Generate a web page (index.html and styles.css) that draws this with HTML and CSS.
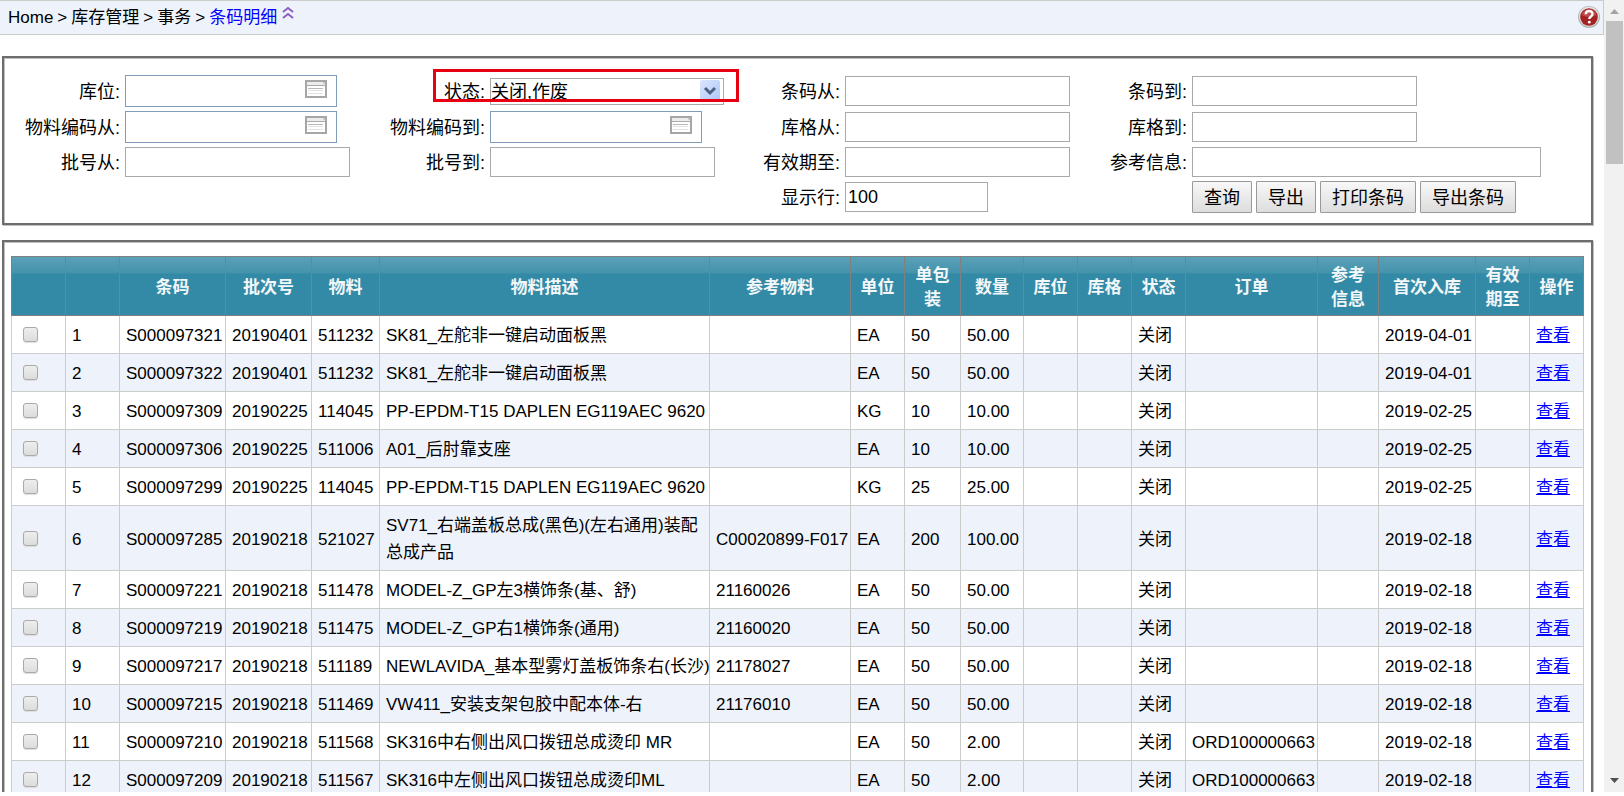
FILE: index.html
```html
<!DOCTYPE html>
<html lang="zh-CN">
<head>
<meta charset="utf-8">
<title>条码明细</title>
<link rel="stylesheet" href="styles.css">
</head>
<body>
<svg class="defs" aria-hidden="true">
  <symbol id="lookup" viewBox="0 0 22 18">
    <rect x="1" y="1" width="20" height="16" fill="#fff" stroke="#a6a6a6" stroke-width="2"/>
    <rect x="2" y="2" width="18" height="3" fill="#ececec"/>
    <path d="M1 5.5h20" stroke="#aaa"/>
    <path d="M18 3h2" stroke="#aaa"/>
    <path d="M3 8.5h15" stroke="#b8b8b8"/>
    <path d="M3 10.5h15M3 13.5h15" stroke="#e2e2e2"/>
  </symbol>
</svg>
<div class="page">
  <header class="topbar">
    <nav class="crumbs">
      <span>Home</span><span>&gt;</span><span>库存管理</span><span>&gt;</span><span>事务</span><span>&gt;</span>
      <a class="current" href="#">条码明细</a>
    </nav>
    <button class="collapse" type="button" aria-label="收起"><svg width="12" height="14" viewBox="0 0 12 14"><path d="M1 6l5-4 5 4M1 12l5-4 5 4" fill="none" stroke="#8a5fc0" stroke-width="2"/></svg></button>
    <button class="help" type="button" aria-label="帮助"><svg width="22" height="22" viewBox="0 0 22 22"><circle cx="11" cy="11" r="11" fill="#b4b4b4"/><circle cx="11" cy="10.500" r="10" fill="#e4e4e4"/><circle cx="11" cy="11" r="8.800" fill="#a32222"/><path d="M3.500 9a7.800 7.800 0 0 1 15 0q-7 4-15 0z" fill="#c04a4a"/><path d="M7.800 8.300c0-4.300 6.700-4.300 6.700-.3 0 2.600-3.200 2.300-3.200 5" fill="none" stroke="#fff" stroke-width="2.400"/><circle cx="11.300" cy="16.200" r="1.400" fill="#fff"/></svg></button>
  </header>

  <form class="panel filters">
    <label for="loc">库位:</label>
    <div class="field lookup"><input id="loc" type="text"><button type="button" aria-label="选择库位"><svg width="22" height="18"><use href="#lookup"/></svg></button></div>
    <label for="status">状态:</label>
    <div class="field status"><select id="status"><option>关闭,作废</option></select>
      <svg class="arrow" width="20" height="21" viewBox="0 0 20 21"><defs><linearGradient id="blue" x2="1" y2="1"><stop offset="0" stop-color="#dbe6ff"/><stop offset="1" stop-color="#aec6f7"/></linearGradient></defs><rect width="20" height="21" rx="2" fill="url(#blue)"/><path d="M5 8l5 5 5-5" fill="none" stroke="#4d6185" stroke-width="3"/></svg>
      <span class="highlight"></span></div>
    <label for="bcFrom">条码从:</label>
    <div class="field"><input id="bcFrom" type="text"></div>
    <label for="bcTo">条码到:</label>
    <div class="field"><input id="bcTo" type="text"></div>

    <label for="matFrom">物料编码从:</label>
    <div class="field lookup"><input id="matFrom" type="text"><button type="button" aria-label="选择物料"><svg width="22" height="18"><use href="#lookup"/></svg></button></div>
    <label for="matTo">物料编码到:</label>
    <div class="field lookup"><input id="matTo" type="text"><button type="button" aria-label="选择物料"><svg width="22" height="18"><use href="#lookup"/></svg></button></div>
    <label for="binFrom">库格从:</label>
    <div class="field"><input id="binFrom" type="text"></div>
    <label for="binTo">库格到:</label>
    <div class="field"><input id="binTo" type="text"></div>

    <label for="lotFrom">批号从:</label>
    <div class="field"><input id="lotFrom" type="text"></div>
    <label for="lotTo">批号到:</label>
    <div class="field"><input id="lotTo" type="text"></div>
    <label for="valid">有效期至:</label>
    <div class="field"><input id="valid" type="text"></div>
    <label for="ref">参考信息:</label>
    <div class="field"><input id="ref" class="wide" type="text"></div>

    <label class="rows" for="rows">显示行:</label>
    <div class="field"><input id="rows" class="short" type="text" value="100"></div>
    <div class="actions">
      <button type="button">查询</button>
      <button type="button">导出</button>
      <button type="button">打印条码</button>
      <button type="button">导出条码</button>
    </div>
  </form>

  <section class="panel results">
    <table>
      <colgroup>
        <col class="c54"><col class="c54"><col class="c106"><col class="c86"><col class="c68"><col class="c330"><col class="c141"><col class="c54"><col class="c56"><col class="c63"><col class="c54"><col class="c54"><col class="c54"><col class="c132"><col class="c61"><col class="c97"><col class="c54"><col class="c54">
      </colgroup>
      <thead>
        <tr><th></th><th></th><th>条码</th><th>批次号</th><th>物料</th><th>物料描述</th><th>参考物料</th><th>单位</th><th>单包装</th><th>数量</th><th>库位</th><th>库格</th><th>状态</th><th>订单</th><th>参考信息</th><th>首次入库</th><th>有效期至</th><th>操作</th></tr>
      </thead>
      <tbody>
        <tr><td><input type="checkbox" aria-label="选择 1"></td><td>1</td><td>S000097321</td><td>20190401</td><td>511232</td><td>SK81_左舵非一键启动面板黑</td><td></td><td>EA</td><td>50</td><td>50.00</td><td></td><td></td><td>关闭</td><td></td><td></td><td>2019-04-01</td><td></td><td><a href="#">查看</a></td></tr>
        <tr><td><input type="checkbox" aria-label="选择 2"></td><td>2</td><td>S000097322</td><td>20190401</td><td>511232</td><td>SK81_左舵非一键启动面板黑</td><td></td><td>EA</td><td>50</td><td>50.00</td><td></td><td></td><td>关闭</td><td></td><td></td><td>2019-04-01</td><td></td><td><a href="#">查看</a></td></tr>
        <tr><td><input type="checkbox" aria-label="选择 3"></td><td>3</td><td>S000097309</td><td>20190225</td><td>114045</td><td>PP-EPDM-T15 DAPLEN EG119AEC 9620</td><td></td><td>KG</td><td>10</td><td>10.00</td><td></td><td></td><td>关闭</td><td></td><td></td><td>2019-02-25</td><td></td><td><a href="#">查看</a></td></tr>
        <tr><td><input type="checkbox" aria-label="选择 4"></td><td>4</td><td>S000097306</td><td>20190225</td><td>511006</td><td>A01_后肘靠支座</td><td></td><td>EA</td><td>10</td><td>10.00</td><td></td><td></td><td>关闭</td><td></td><td></td><td>2019-02-25</td><td></td><td><a href="#">查看</a></td></tr>
        <tr><td><input type="checkbox" aria-label="选择 5"></td><td>5</td><td>S000097299</td><td>20190225</td><td>114045</td><td>PP-EPDM-T15 DAPLEN EG119AEC 9620</td><td></td><td>KG</td><td>25</td><td>25.00</td><td></td><td></td><td>关闭</td><td></td><td></td><td>2019-02-25</td><td></td><td><a href="#">查看</a></td></tr>
        <tr><td><input type="checkbox" aria-label="选择 6"></td><td>6</td><td>S000097285</td><td>20190218</td><td>521027</td><td class="long">SV71_右端盖板总成(黑色)(左右通用)装配总成产品</td><td>C00020899-F017</td><td>EA</td><td>200</td><td>100.00</td><td></td><td></td><td>关闭</td><td></td><td></td><td>2019-02-18</td><td></td><td><a href="#">查看</a></td></tr>
        <tr><td><input type="checkbox" aria-label="选择 7"></td><td>7</td><td>S000097221</td><td>20190218</td><td>511478</td><td>MODEL-Z_GP左3横饰条(基、舒)</td><td>21160026</td><td>EA</td><td>50</td><td>50.00</td><td></td><td></td><td>关闭</td><td></td><td></td><td>2019-02-18</td><td></td><td><a href="#">查看</a></td></tr>
        <tr><td><input type="checkbox" aria-label="选择 8"></td><td>8</td><td>S000097219</td><td>20190218</td><td>511475</td><td>MODEL-Z_GP右1横饰条(通用)</td><td>21160020</td><td>EA</td><td>50</td><td>50.00</td><td></td><td></td><td>关闭</td><td></td><td></td><td>2019-02-18</td><td></td><td><a href="#">查看</a></td></tr>
        <tr><td><input type="checkbox" aria-label="选择 9"></td><td>9</td><td>S000097217</td><td>20190218</td><td>511189</td><td>NEWLAVIDA_基本型雾灯盖板饰条右(长沙)</td><td>21178027</td><td>EA</td><td>50</td><td>50.00</td><td></td><td></td><td>关闭</td><td></td><td></td><td>2019-02-18</td><td></td><td><a href="#">查看</a></td></tr>
        <tr><td><input type="checkbox" aria-label="选择 10"></td><td>10</td><td>S000097215</td><td>20190218</td><td>511469</td><td>VW411_安装支架包胶中配本体-右</td><td>21176010</td><td>EA</td><td>50</td><td>50.00</td><td></td><td></td><td>关闭</td><td></td><td></td><td>2019-02-18</td><td></td><td><a href="#">查看</a></td></tr>
        <tr><td><input type="checkbox" aria-label="选择 11"></td><td>11</td><td>S000097210</td><td>20190218</td><td>511568</td><td>SK316中右侧出风口拨钮总成烫印 MR</td><td></td><td>EA</td><td>50</td><td>2.00</td><td></td><td></td><td>关闭</td><td>ORD100000663</td><td></td><td>2019-02-18</td><td></td><td><a href="#">查看</a></td></tr>
        <tr><td><input type="checkbox" aria-label="选择 12"></td><td>12</td><td>S000097209</td><td>20190218</td><td>511567</td><td>SK316中左侧出风口拨钮总成烫印ML</td><td></td><td>EA</td><td>50</td><td>2.00</td><td></td><td></td><td>关闭</td><td>ORD100000663</td><td></td><td>2019-02-18</td><td></td><td><a href="#">查看</a></td></tr>
      </tbody>
    </table>
  </section>
</div>
<div class="scrollbar" aria-hidden="true">
  <svg width="9" height="5" viewBox="0 0 9 5"><path d="M0 5L4.500 0 9 5z" fill="#a3a3a3"/></svg>
  <div class="track"><div class="thumb"></div></div>
  <svg width="9" height="5" viewBox="0 0 9 5"><path d="M0 0h9L4.500 5z" fill="#505050"/></svg>
</div>
</body>
</html>
```
FILE: styles.css
```css
* { box-sizing: border-box; }
body {
  margin: 0;
  height: 100vh;
  padding-bottom: 4px;
  display: flex;
  overflow: hidden;
  background: #fff;
  color: #000;
  font: 17px/27px "Liberation Sans", "Noto Sans CJK SC", sans-serif;
}
.defs { display: none; }
button, input, select { font: inherit; color: inherit; }
svg { display: block; }
.page { flex: 1; min-width: 0; overflow: hidden; }

.topbar {
  display: flex;
  height: 35px;
  padding: 0 3px 0 8px;
  background: #eef3fb;
  border: 1px solid #ccc;
  border-left: 0;
}
.crumbs { display: flex; gap: 4px; align-items: center; white-space: nowrap; }
.current { color: #00f; text-decoration: none; }
.collapse, .help { padding: 0; border: 0; background: none; align-self: flex-start; }
.collapse { margin: 5px 0 0 5px; }
.help { margin: 5px 0 0 auto; }

.panel {
  margin: 0 11px 15px 2px;
  border: 2px solid #6d6d6d;
  box-shadow: 1px 1px 0 #c0c0c0, inset 1px 1px 0 #c0c0c0;
}
.filters {
  margin-top: 21px;
  padding: 17px 0 10px;
  display: grid;
  grid-template-columns: 116fr 241fr 114fr 241fr 104fr 236fr 101fr 399fr;
  gap: 4px 5px;
  align-items: center;
  font-size: 18px;
}
.filters label { padding-top: 2px; text-align: right; white-space: nowrap; }
.filters .rows { grid-column: 5; }
.field { position: relative; }
.field input {
  display: block;
  width: 225px;
  height: 30px;
  padding: 0 2px;
  border: 1px solid #a9a9a9;
  background: #fff;
}
.field .short { width: 143px; }
.field .wide { width: 349px; }
.lookup input { width: 212px; height: 32px; border-color: #7f9db9; padding-right: 34px; }
.lookup button {
  position: absolute;
  left: 180px;
  top: 5px;
  padding: 0;
  border: 0;
  background: none;
}
.status select {
  display: block;
  appearance: none;
  width: 234px;
  height: 27px;
  padding: 0;
  border: 1px solid #a9a9a9;
  border-radius: 0;
  background: #fff;
}
.arrow { position: absolute; left: 210px; top: 2px; pointer-events: none; }
.highlight {
  position: absolute;
  left: -57px;
  top: -9px;
  width: 306px;
  height: 33px;
  border: 3px solid #e60012;
  pointer-events: none;
}
.actions { grid-column: 8; display: flex; gap: 4px; }
.actions button {
  height: 32px;
  padding: 2px 11px 0;
  border: 1px solid #999;
  border-radius: 1px;
  background: linear-gradient(#f8f8f8, #ddd);
  white-space: nowrap;
}

.results { padding: 14px 8px 8px 7px; }
table { width: 100%; table-layout: fixed; border-collapse: collapse; }
.c54 { width: 54px; }
.c56 { width: 56px; }
.c61 { width: 61px; }
.c63 { width: 63px; }
.c68 { width: 68px; }
.c86 { width: 86px; }
.c97 { width: 97px; }
.c106 { width: 106px; }
.c132 { width: 132px; }
.c141 { width: 141px; }
.c330 { width: 330px; }
thead { background: linear-gradient(#5aa1b8, #4493ac 16px, #338aa6 17px); }
th {
  padding: 7px 8px 3px;
  border: 1px solid #808080;
  color: #f2f7f9;
  line-height: 24px;
}
td {
  padding: 6px 0 4px 6px;
  border: 1px solid #ccc;
  white-space: nowrap;
}
.long { padding-right: 6px; white-space: normal; }
tbody tr:nth-child(even) { background: #eef3fb; }
td a { color: #00f; }
td input {
  display: block;
  appearance: none;
  width: 15px;
  height: 15px;
  margin: 0 0 2px 5px;
  border: 1px solid #aaa;
  border-radius: 3px;
  background: linear-gradient(#eee, #dcdcdc);
  box-shadow: 0 1px 1px #ddd;
}

.scrollbar {
  width: 20px;
  padding: 9px 0;
  display: flex;
  flex-direction: column;
  align-items: center;
  gap: 7px;
  background: #f1f1f1;
}
.track { flex: 1; width: 17px; }
.thumb { height: 19%; background: #c1c1c1; }
```
